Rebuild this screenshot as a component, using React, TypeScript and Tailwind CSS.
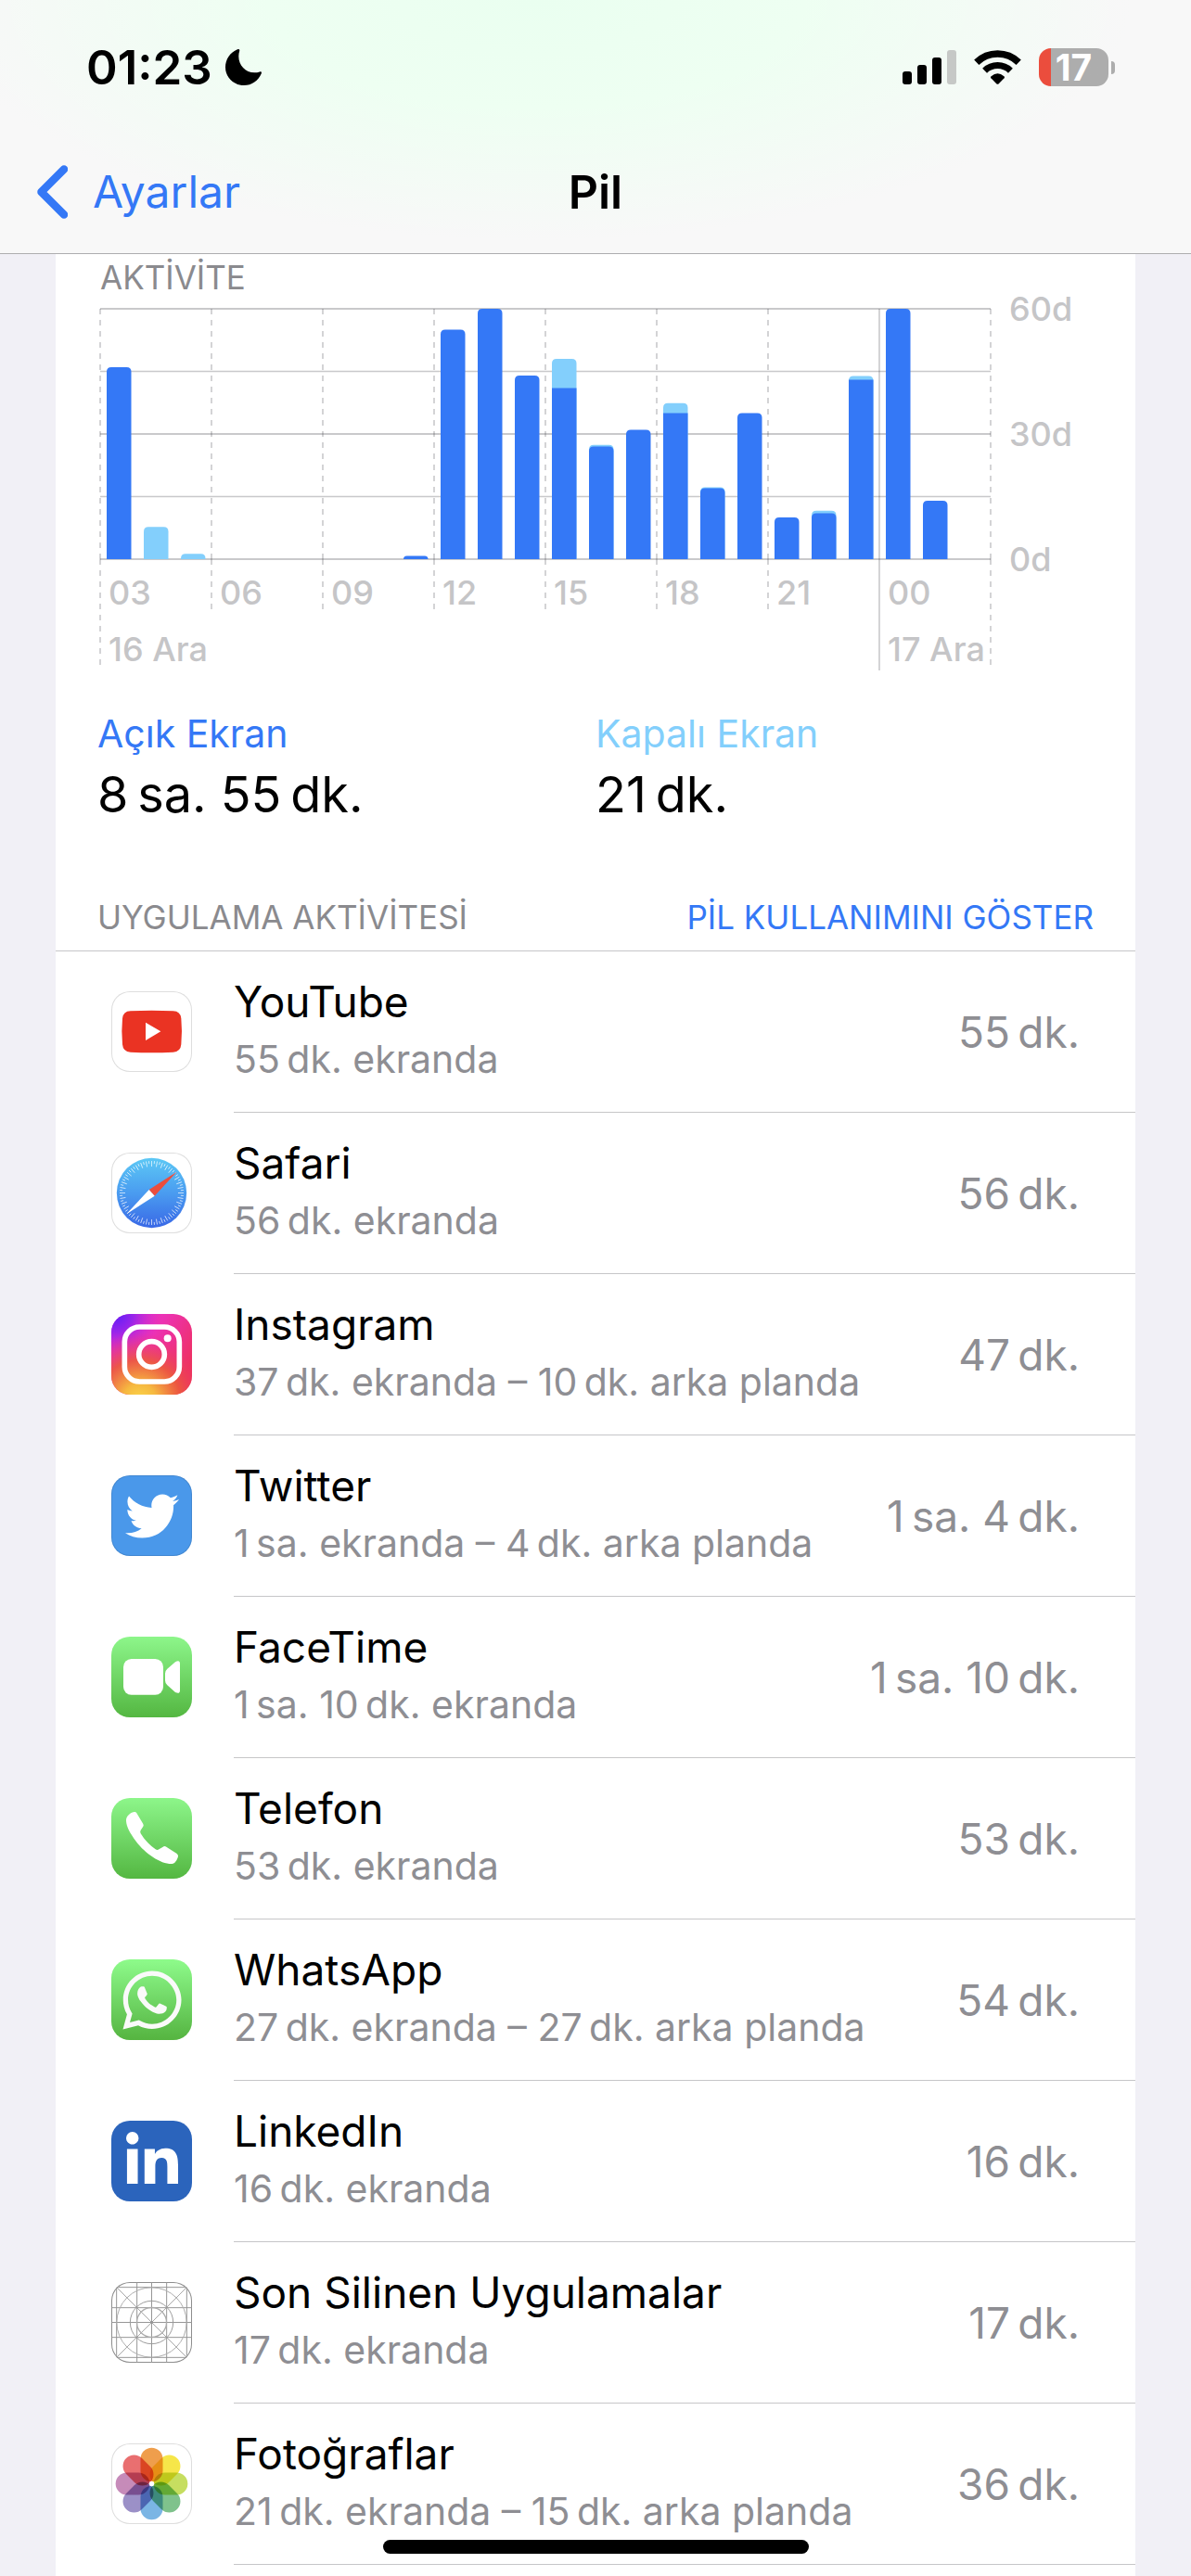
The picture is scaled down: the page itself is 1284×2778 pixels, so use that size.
import type { ReactNode } from "react";
import { FaLinkedinIn, FaTwitter, FaWhatsapp } from "react-icons/fa";

type Bar = { on: number; off: number };

const bars: Bar[] = [
  { on: 46, off: 0 },
  { on: 0, off: 7.7 },
  { on: 0, off: 1.3 },
  { on: 0, off: 0 },
  { on: 0, off: 0 },
  { on: 0, off: 0 },
  { on: 0, off: 0 },
  { on: 0, off: 0 },
  { on: 0.8, off: 0 },
  { on: 55, off: 0 },
  { on: 60, off: 0 },
  { on: 44, off: 0 },
  { on: 41, off: 7 },
  { on: 27, off: 0.4 },
  { on: 31, off: 0 },
  { on: 35, off: 2.4 },
  { on: 17, off: 0.2 },
  { on: 35, off: 0 },
  { on: 10, off: 0 },
  { on: 11, off: 0.6 },
  { on: 43, off: 0.9 },
  { on: 60, off: 0 },
  { on: 14, off: 0 },
];

const hours = ["03", "06", "09", "12", "15", "18", "21", "00"];

const LEFT = 48;
const TOP = 9;
const BOTTOM = 279;
const PER_MINUTE = 4.5;

function barPath(x: number, top: number, bottom: number, width: number) {
  const r = Math.min(5, bottom - top);
  return `M${x} ${bottom}V${top + r}Q${x} ${top} ${x + r} ${top}H${x + width - r}Q${x + width} ${top} ${x + width} ${top + r}V${bottom}Z`;
}

function ActivityChart() {
  return (
    <svg viewBox="0 0 1164 406" className="block h-auto w-full overflow-visible" role="img" aria-label="Saatlik ekran etkinliği">
      <g stroke="#3c3c43" strokeOpacity="0.28" fill="none">
        {[0, 1, 2, 3, 4].map((i) => (
          <line key={i} x1={LEFT} x2={LEFT + 960} y1={TOP + i * 67.5} y2={TOP + i * 67.5} strokeWidth={i % 2 ? 1.3 : 2} />
        ))}
        {[0, 1, 2, 3, 4, 5, 6, 7, 8].map((i) => {
          const x = LEFT + i * 120;
          const end = i === 7 ? 399 : i === 0 || i === 8 ? 393 : 333;
          return (
            <path
              key={i}
              d={`M${x} ${TOP}V${BOTTOM}M${x} ${BOTTOM}V${end}`}
              strokeWidth="1.6"
              strokeDasharray={i === 7 ? undefined : "6 6"}
            />
          );
        })}
      </g>
      {bars.map((bar, i) => {
        const x = LEFT + 7 + i * 40;
        const total = bar.on + bar.off;
        if (total === 0) return null;
        const onTop = BOTTOM - bar.on * PER_MINUTE;
        return (
          <g key={i}>
            {bar.off > 0 && <path d={barPath(x, BOTTOM - total * PER_MINUTE, BOTTOM, 26.5)} fill="#83cffc" />}
            {bar.on > 0 && bar.off > 0.8 && <rect x={x} y={onTop} width="26.5" height={BOTTOM - onTop} fill="#3478f6" />}
            {bar.on > 0 && bar.off <= 0.8 && <path d={barPath(x, onTop, BOTTOM, 26.5)} fill="#3478f6" />}
          </g>
        );
      })}
      <g fill="#c5c5c7" fontSize="36" fontWeight="500">
        {hours.map((hour, i) => (
          <text key={hour} x={LEFT + 9 + i * 120} y="328">
            {hour}
          </text>
        ))}
        <text x={LEFT + 9} y="389">16 Ara</text>
        <text x={LEFT + 849} y="389">17 Ara</text>
        <text x="1028" y="22">60d</text>
        <text x="1028" y="157">30d</text>
        <text x="1028" y="292">0d</text>
      </g>
    </svg>
  );
}

function Tile({ className, children }: { className: string; children?: ReactNode }) {
  return (
    <div className={`mt-[43px] flex size-[87px] shrink-0 items-center justify-center overflow-hidden rounded-[20px] ${className}`}>
      {children}
    </div>
  );
}

const WHITE = "bg-white ring-1 ring-inset ring-[#dedede]";
const GREEN = "bg-linear-to-b from-[#8df68a] to-[#54b741]";

function YouTubeIcon() {
  return (
    <Tile className={WHITE}>
      <svg viewBox="0 0 261 261" className="size-full" aria-hidden="true">
        <path d="M62 64Q130 61 200 64Q224 65 226 88Q230 130 226 172Q224 196 200 197Q130 200 62 197Q38 196 36 172Q32 130 36 88Q38 65 62 64Z" fill="#ea3323" />
        <path d="M111 101L160 130L111 159Z" fill="#fff" />
      </svg>
    </Tile>
  );
}

function SafariIcon() {
  return (
    <Tile className={WHITE}>
      <svg viewBox="0 0 261 261" className="size-full" aria-hidden="true">
        <defs>
          <linearGradient id="safari" x1="0" y1="0" x2="0" y2="1">
            <stop offset="0" stopColor="#5cc8f5" />
            <stop offset="0.5" stopColor="#4a9cf0" />
            <stop offset="1" stopColor="#3968e6" />
          </linearGradient>
        </defs>
        <circle cx="130.500" cy="130.500" r="113" fill="url(#safari)" />
        <g stroke="#fff" strokeWidth="2">
          {Array.from({ length: 72 }, (_, i) => (
            <line key={i} x1="130.500" x2="130.500" y1="27" y2={i % 2 ? 36 : 45} transform={`rotate(${i * 5} 130.500 130.500)`} />
          ))}
        </g>
        <path d="M212 62L122 120L140 140Z" fill="#eb4d3d" />
        <path d="M49 199L122 120L140 140Z" fill="#fff" />
      </svg>
    </Tile>
  );
}

function InstagramIcon() {
  return (
    <Tile className="">
      <svg viewBox="0 0 261 261" className="size-full" aria-hidden="true">
        <defs>
          <linearGradient id="ig-base" x1="0" y1="0" x2="1" y2="0.6">
            <stop offset="0" stopColor="#d92fd6" />
            <stop offset="0.5" stopColor="#ec32b4" />
            <stop offset="1" stopColor="#ee3060" />
          </linearGradient>
          <radialGradient id="ig-purple" cx="0.05" cy="0" r="0.55">
            <stop offset="0" stopColor="#5a1df8" />
            <stop offset="0.4" stopColor="#8a22f0" stopOpacity="0.85" />
            <stop offset="1" stopColor="#d22ad8" stopOpacity="0" />
          </radialGradient>
          <radialGradient id="ig-warm" cx="0.35" cy="1.08" r="0.85">
            <stop offset="0" stopColor="#fbd84a" />
            <stop offset="0.25" stopColor="#f6b840" />
            <stop offset="0.6" stopColor="#ec5a3c" stopOpacity="0.9" />
            <stop offset="1" stopColor="#ec3070" stopOpacity="0" />
          </radialGradient>
        </defs>
        <rect width="261" height="261" fill="url(#ig-base)" />
        <rect width="261" height="261" fill="url(#ig-purple)" />
        <rect width="261" height="261" fill="url(#ig-warm)" />
        <g fill="none" stroke="#fff" strokeWidth="17">
          <rect x="43" y="42" width="177" height="177" rx="48" />
          <circle cx="130.500" cy="130.500" r="41.500" />
        </g>
        <circle cx="182" cy="79" r="12" fill="#fff" />
      </svg>
    </Tile>
  );
}

function TwitterIcon() {
  return (
    <Tile className="bg-[#4a98ea] ring-1 ring-inset ring-black/10">
      <FaTwitter size={58} color="#fff" aria-hidden="true" />
    </Tile>
  );
}

function FaceTimeIcon() {
  return (
    <Tile className={GREEN}>
      <svg viewBox="0 0 261 261" className="size-full" fill="#fff" aria-hidden="true">
        <rect x="39" y="72" width="129" height="116" rx="26" />
        <path d="M174 119Q174 110 181 104L207 82Q222 74 222 88V174Q222 187 207 180L181 157Q174 151 174 142Z" />
      </svg>
    </Tile>
  );
}

function PhoneIcon() {
  return (
    <Tile className={GREEN}>
      <svg viewBox="0 0 261 261" className="size-full" fill="#fff" aria-hidden="true">
        <path d="M48 74C47 62 58 48 74 45Q79 44 82 49L103 84Q106 89 102 94L95 104Q92 109 95 115C108 137 126 154 143 166Q149 170 154 166L166 159Q172 154 178 158L212 180Q217 184 216 189C213 200 206 213 196 213C160 214 110 180 80 140C60 113 49 92 48 74Z" />
      </svg>
    </Tile>
  );
}

function WhatsAppIcon() {
  return (
    <Tile className="bg-linear-to-b from-[#8efb8b] to-[#55b440]">
      <FaWhatsapp size={72} color="#fafafa" aria-hidden="true" />
    </Tile>
  );
}

function LinkedInIcon() {
  return (
    <Tile className="bg-[#2b64bc]">
      <FaLinkedinIn size={64} color="#fff" aria-hidden="true" />
    </Tile>
  );
}

function PlaceholderIcon() {
  const guides = [17, 83, 130.5, 179, 244];
  return (
    <Tile className="bg-white ring-1 ring-inset ring-[#8e8e8e]">
      <svg viewBox="0 0 261 261" className="size-full" fill="none" stroke="#969696" strokeWidth="3" aria-hidden="true">
        {guides.map((g) => (
          <path key={g} d={`M${g} 0V261M0 ${g}H261`} />
        ))}
        <path d="M17 17L244 244M244 17L17 244" strokeWidth="2.500" />
        <g stroke="#adadad">
          <circle cx="130.500" cy="130.500" r="113" />
          <circle cx="130.500" cy="130.500" r="69.500" stroke="#9c9c9c" />
          <circle cx="130.500" cy="130.500" r="48" strokeWidth="4" />
        </g>
        <circle cx="130.500" cy="130.500" r="5" fill="#969696" stroke="none" />
      </svg>
    </Tile>
  );
}

const petals = ["#ef9e4c", "#f6e649", "#c6de60", "#7fc28c", "#7bb5e4", "#9b90c7", "#c68bb9", "#e96f70"];

function PhotosIcon() {
  return (
    <Tile className={WHITE}>
      <svg viewBox="0 0 261 261" className="isolate size-full" aria-hidden="true">
        {petals.map((color, i) => (
          <rect
            key={color}
            className="mix-blend-multiply"
            x="94.500"
            y="14"
            width="72"
            height="110"
            rx="36"
            fill={color}
            transform={`rotate(${i * 45} 130.500 130.500)`}
          />
        ))}
        <circle cx="130.500" cy="130.500" r="8" fill="#fff" />
      </svg>
    </Tile>
  );
}

type Usage = { name: string; detail: string; total: string; icon: ReactNode };

const apps: Usage[] = [
  { name: "YouTube", detail: "55\u2009dk. ekranda", total: "55\u2009dk.", icon: <YouTubeIcon /> },
  { name: "Safari", detail: "56\u2009dk. ekranda", total: "56\u2009dk.", icon: <SafariIcon /> },
  { name: "Instagram", detail: "37\u2009dk. ekranda – 10\u2009dk. arka planda", total: "47\u2009dk.", icon: <InstagramIcon /> },
  { name: "Twitter", detail: "1\u2009sa. ekranda – 4\u2009dk. arka planda", total: "1\u2009sa. 4\u2009dk.", icon: <TwitterIcon /> },
  { name: "FaceTime", detail: "1\u2009sa. 10\u2009dk. ekranda", total: "1\u2009sa. 10\u2009dk.", icon: <FaceTimeIcon /> },
  { name: "Telefon", detail: "53\u2009dk. ekranda", total: "53\u2009dk.", icon: <PhoneIcon /> },
  { name: "WhatsApp", detail: "27\u2009dk. ekranda – 27\u2009dk. arka planda", total: "54\u2009dk.", icon: <WhatsAppIcon /> },
  { name: "LinkedIn", detail: "16\u2009dk. ekranda", total: "16\u2009dk.", icon: <LinkedInIcon /> },
  { name: "Son Silinen Uygulamalar", detail: "17\u2009dk. ekranda", total: "17\u2009dk.", icon: <PlaceholderIcon /> },
  { name: "Fotoğraflar", detail: "21\u2009dk. ekranda – 15\u2009dk. arka planda", total: "36\u2009dk.", icon: <PhotosIcon /> },
];

function StatusBar() {
  return (
    <div className="flex h-[61px] items-center justify-between pl-[93px] pr-[82px]">
      <div className="flex items-center gap-[14px]">
        <span className="text-[51px] font-semibold leading-[60px]">01:23</span>
        <svg viewBox="0 0 39 39" className="size-[39px]" aria-label="Rahatsız Etmeyin" role="img">
          <path d="M14 0C15 0 15.500 1 15.200 2C11 15 22 29 37 24.500C38.500 24 39.300 25 38.800 26.200C35.500 34 28.500 39 20 39C9 39 0 30.500 0 19.500C0 11 5 3.500 13 0.200Z" />
        </svg>
      </div>
      <div className="flex items-center">
        <svg viewBox="0 0 58 37" className="h-[37px] w-[58px]" role="img" aria-label="Sinyal gücü">
          <rect y="23" width="10" height="14" rx="3" />
          <rect x="16" y="16" width="10" height="21" rx="3" />
          <rect x="32" y="8" width="10" height="29" rx="3" />
          <rect x="48" width="10" height="37" rx="3" fill="#c6c8c6" />
        </svg>
        <svg viewBox="0 0 51 37" className="ml-[19px] h-[37px] w-[51px]" role="img" aria-label="Wi-Fi">
          <path d="M2.800 13.200A32.500 32.500 0 0 1 48.200 13.200" fill="none" stroke="#000" strokeWidth="7.500" />
          <path d="M11.600 22.200A20 20 0 0 1 39.400 22.200" fill="none" stroke="#000" strokeWidth="7" />
          <path d="M24.500 36.400L18.400 30.300Q17.500 29.200 18.600 28.200Q25.500 22.500 32.400 28.200Q33.500 29.200 32.600 30.300L26.500 36.400Q25.500 37.300 24.500 36.400Z" />
        </svg>
        <div className="ml-[19px] flex h-[41px] w-[75px] items-center justify-center rounded-[13px] bg-linear-to-r from-[#eb4d3d] from-[13px] to-[#adadad] to-[13px]">
          <span className="text-[39px] font-bold leading-[41px] text-white">17</span>
        </div>
        <div className="ml-[3px] h-[14px] w-[4px] rounded-r-full bg-[#adadad]" />
      </div>
    </div>
  );
}

function Legend({ label, value, className }: { label: string; value: string; className: string }) {
  return (
    <div className="flex-1">
      <dt className={`text-[41px] leading-[56px] ${className}`}>{label}</dt>
      <dd className="text-[54px] leading-[76px]">{value}</dd>
    </div>
  );
}

export default function App() {
  return (
    <div className="flex min-h-screen flex-col bg-[#f1f0f6] font-['Inter',sans-serif] text-black">
      <header className="border-b border-[#adadaf] bg-[#f8f8f8] bg-[radial-gradient(ellipse_50%_95%_at_45%_0%,#eafff0_0%,#eefff2_45%,#f8f8f800_100%)] pt-[42px]">
        <StatusBar />
        <nav className="grid h-[170px] grid-cols-3 items-start pt-[73px]">
          <a href="#ayarlar" className="flex items-center gap-[27px] pl-[40px] text-[48px] leading-[62px] text-[#3478f6]">
            <svg viewBox="0 0 33 58" className="h-[58px] w-[33px]" fill="none" stroke="currentColor" strokeWidth="8.500" strokeLinecap="round" strokeLinejoin="round" aria-hidden="true">
              <path d="M29 4.500L4.500 29L29 53.500" />
            </svg>
            Ayarlar
          </a>
          <h1 className="text-center text-[50px] font-semibold leading-[62px]">Pil</h1>
        </nav>
      </header>

      <main className="mx-[60px] flex-1 bg-white">
        <section>
          <h2 className="pl-[48px] text-[35px] leading-[50px] text-[#8a8a8e]">AKTİVİTE</h2>
          <ActivityChart />
          <dl className="mt-[33px] flex px-[45px]">
            <Legend label="Açık Ekran" value={"8\u2009sa. 55\u2009dk."} className="text-[#3478f6]" />
            <Legend label="Kapalı Ekran" value={"21\u2009dk."} className="text-[#83cffc]" />
          </dl>
        </section>

        <section className="mt-[58px]">
          <div className="flex h-[73px] items-center justify-between border-b border-[#c6c6c8] px-[45px] text-[35px]">
            <h2 className="text-[#8a8a8e]">UYGULAMA AKTİVİTESİ</h2>
            <button type="button" className="text-[#3478f6]">PİL KULLANIMINI GÖSTER</button>
          </div>
          <ul>
            {apps.map((app) => (
              <li key={app.name} className="flex h-[174px] items-start pl-[60px]">
                {app.icon}
                <div className="ml-[45px] flex h-full flex-1 items-center justify-between border-b border-[#c6c6c8] pr-[60px]">
                  <div className="self-start pt-[23px]">
                    <h3 className="text-[46px] leading-[62px]">{app.name}</h3>
                    <p className="text-[41px] leading-[62px] text-[#8e8e93]">{app.detail}</p>
                  </div>
                  <span className="text-[46px] leading-[62px] text-[#8e8e93]">{app.total}</span>
                </div>
              </li>
            ))}
          </ul>
        </section>
      </main>

      <div className="fixed inset-x-0 bottom-[24px] mx-auto h-[15px] w-[459px] rounded-full bg-black" />
    </div>
  );
}
